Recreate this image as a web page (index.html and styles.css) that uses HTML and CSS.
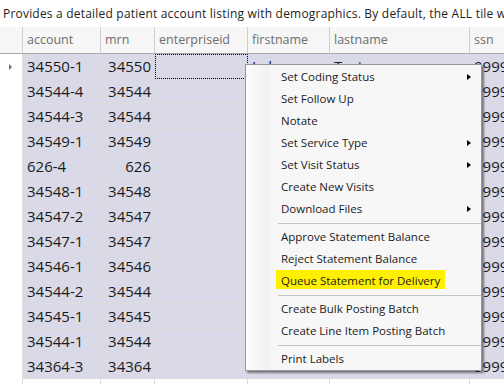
FILE: index.html
```html
<!DOCTYPE html>
<html lang="en">
<head>
  <meta charset="UTF-8" />
  <title>Patient Accounts</title>
  <link rel="stylesheet" href="styles.css">
</head>
<body>
  <p class="desc">Provides a detailed patient account listing with demographics. By default, the ALL tile will display every account.</p>

  <div class="grid-wrap">
    <div class="grid">
      <!-- header -->
      <div class="hdr corner"></div>
      <div class="hdr">account</div>
      <div class="hdr">mrn</div>
      <div class="hdr">enterpriseid</div>
      <div class="hdr">firstname</div>
      <div class="hdr">lastname</div>
      <div class="hdr">ssn</div>

      <div class="rh"><span class="cur"></span></div>
      <div class="cell">34550-1</div><div class="cell num">34550</div><div class="cell focus"></div><div class="cell">Lalo</div><div class="cell">Test</div><div class="cell">999999999</div>
      <div class="rh"></div>
      <div class="cell">34544-4</div><div class="cell num">34544</div><div class="cell"></div><div class="cell"></div><div class="cell"></div><div class="cell">999999999</div>
      <div class="rh"></div>
      <div class="cell">34544-3</div><div class="cell num">34544</div><div class="cell"></div><div class="cell"></div><div class="cell"></div><div class="cell">999999999</div>
      <div class="rh"></div>
      <div class="cell">34549-1</div><div class="cell num">34549</div><div class="cell"></div><div class="cell"></div><div class="cell"></div><div class="cell">999999999</div>
      <div class="rh"></div>
      <div class="cell">626-4</div><div class="cell num">626</div><div class="cell"></div><div class="cell"></div><div class="cell"></div><div class="cell">999999999</div>
      <div class="rh"></div>
      <div class="cell">34548-1</div><div class="cell num">34548</div><div class="cell"></div><div class="cell"></div><div class="cell"></div><div class="cell">999999999</div>
      <div class="rh"></div>
      <div class="cell">34547-2</div><div class="cell num">34547</div><div class="cell"></div><div class="cell"></div><div class="cell"></div><div class="cell">999999999</div>
      <div class="rh"></div>
      <div class="cell">34547-1</div><div class="cell num">34547</div><div class="cell"></div><div class="cell"></div><div class="cell"></div><div class="cell">999999999</div>
      <div class="rh"></div>
      <div class="cell">34546-1</div><div class="cell num">34546</div><div class="cell"></div><div class="cell"></div><div class="cell"></div><div class="cell">999999999</div>
      <div class="rh"></div>
      <div class="cell">34544-2</div><div class="cell num">34544</div><div class="cell"></div><div class="cell"></div><div class="cell"></div><div class="cell">999999999</div>
      <div class="rh"></div>
      <div class="cell">34545-1</div><div class="cell num">34545</div><div class="cell"></div><div class="cell"></div><div class="cell"></div><div class="cell">999999999</div>
      <div class="rh"></div>
      <div class="cell">34544-1</div><div class="cell num">34544</div><div class="cell"></div><div class="cell"></div><div class="cell"></div><div class="cell">999999999</div>
      <div class="rh"></div>
      <div class="cell">34364-3</div><div class="cell num">34364</div><div class="cell"></div><div class="cell"></div><div class="cell"></div><div class="cell">999999999</div>

      <!-- next row, not selected -->
      <div class="rh"></div>
      <div class="cell blank"></div><div class="cell blank"></div><div class="cell blank"></div><div class="cell blank"></div><div class="cell blank"></div><div class="cell blank"></div>
    </div>

    <!-- Context menu -->
    <div class="menu">
      <div class="item sub">Set Coding Status</div>
      <div class="item">Set Follow Up</div>
      <div class="item">Notate</div>
      <div class="item sub">Set Service Type</div>
      <div class="item sub">Set Visit Status</div>
      <div class="item">Create New Visits</div>
      <div class="item sub">Download Files</div>
      <div class="sep"></div>
      <div class="item">Approve Statement Balance</div>
      <div class="item">Reject Statement Balance</div>
      <div class="item"><span class="mark">Queue Statement for Delivery</span></div>
      <div class="sep"></div>
      <div class="item">Create Bulk Posting Batch</div>
      <div class="item">Create Line Item Posting Batch</div>
      <div class="sep"></div>
      <div class="item">Print Labels</div>
    </div>
  </div>
</body>
</html>
```

FILE: styles.css
```css
body {
  margin: 0;
  font-family: "Open Sans", "Noto Sans", sans-serif;
  background: #fff;
  color: #1e1e1e;
  overflow: hidden;
}

.desc {
  margin: 0;
  height: 27px;
  padding-left: 3px;
  font-size: 12px;
  letter-spacing: 0.2px;
  line-height: 27px;
  white-space: nowrap;
  overflow: hidden;
}

.grid-wrap {
  position: relative;
  overflow: hidden;
  height: 357px;
}

.grid {
  display: grid;
  grid-template-columns: 23px 78px 54px 93px 82px 140px 120px;
  grid-template-rows: 27px;
  grid-auto-rows: 25px;
}

.grid > div {
  box-sizing: border-box;
  white-space: nowrap;
  overflow: hidden;
}

.hdr {
  background: #f6f6f6;
  border-right: 1px solid #cfcfcf;
  border-bottom: 1px solid #a8a8a8;
  padding-left: 4px;
  font-size: 12.5px;
  line-height: 26px;
  color: #6d6d6d;
}

.rh {
  background: #fff;
  border-right: 1px solid #dcdcdc;
  display: flex;
  align-items: center;
  padding-left: 9px;
}

.cur {
  width: 0;
  height: 0;
  border-left: 3px solid #6a6a6a;
  border-top: 3px solid transparent;
  border-bottom: 3px solid transparent;
}

.cell {
  background: #d9d9e7;
  border-right: 1px solid #dcdcdc;
  border-bottom: 1px solid #dcdcdc;
  padding: 0 4px;
  font-size: 15px;
  line-height: 24px;
  color: #1b1b1b;
}

.cell.num { text-align: right; padding-right: 3px; }
.cell.blank { background: #fff; }

.cell.focus {
  outline: 1px dotted #000;
  outline-offset: -1px;
}

/* context menu */
.menu {
  position: absolute;
  left: 245px;
  top: 37px;
  width: 235px;
  padding: 1px 0 0;
  border: 1px solid #979797;
  background: linear-gradient(to right, #fcfcfc 0, #f1f1f1 24px, #f7f7f7 24px);
  box-shadow: 2px 2px 2px rgba(0,0,0,0.45);
  font-size: 11.5px;
  color: #1b1b1b;
}

.item {
  height: 22px;
  line-height: 22px;
  padding-left: 35px;
  white-space: nowrap;
  position: relative;
}

.item.sub::after {
  content: "";
  position: absolute;
  right: 10px;
  top: 8px;
  border-left: 4px solid #000;
  border-top: 3px solid transparent;
  border-bottom: 3px solid transparent;
}

.sep {
  height: 6px;
  margin-left: 32px;
  background: linear-gradient(#c5c5c5, #c5c5c5) 0 3px / 100% 1px no-repeat;
}

.mark {
  display: inline-block;
  height: 19px;
  vertical-align: top;
  margin-left: -5px;
  padding: 0 5px;
  background: #fff000;
}
```
